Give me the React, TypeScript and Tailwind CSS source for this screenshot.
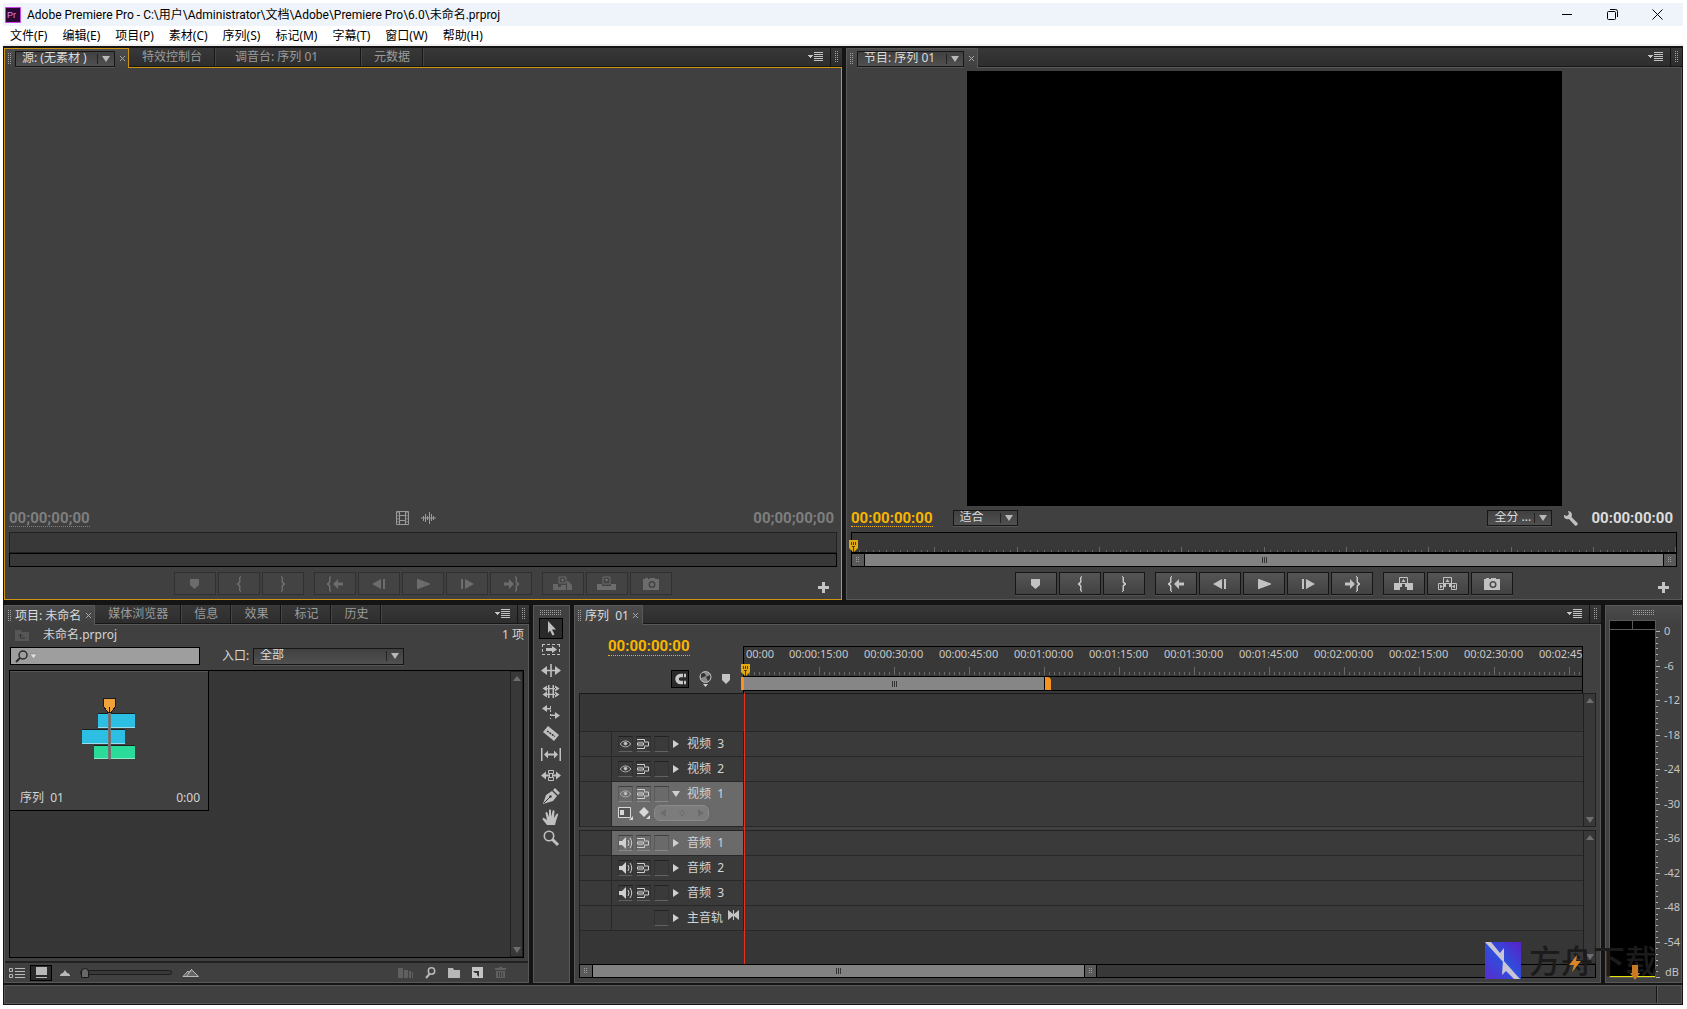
import type { ReactNode } from "react";
import { clsx } from "clsx";

const menus = ["文件(F)", "编辑(E)", "项目(P)", "素材(C)", "序列(S)", "标记(M)", "字幕(T)", "窗口(W)", "帮助(H)"];

const rulerLabels = [
  "00:00:15:00",
  "00:00:30:00",
  "00:00:45:00",
  "00:01:00:00",
  "00:01:15:00",
  "00:01:30:00",
  "00:01:45:00",
  "00:02:00:00",
  "00:02:15:00",
  "00:02:30:00",
  "00:02:45",
];

const dbLabels = ["0", "-6", "-12", "-18", "-24", "-30", "-36", "-42", "-48", "-54"];

function range(n: number) {
  return Array.from({ length: n }, (_, i) => i);
}

/* ---------- small shared pieces ---------- */

function Grip({ cols = 2, rows = 6, className }: { cols?: number; rows?: number; className?: string }) {
  return (
    <svg width={cols * 2} height={rows * 2} className={clsx("shrink-0", className)} shapeRendering="crispEdges">
      {range(cols * rows).map((i) => (
        <rect key={i} x={(i % cols) * 2} y={Math.floor(i / cols) * 2} width="1" height="1" fill="#a0a0a0" />
      ))}
    </svg>
  );
}

function Arrow({ dir = "down", className }: { dir?: "down" | "up" | "right"; className?: string }) {
  const d = { down: "M0 1h8L4 7z", up: "M0 6h8L4 1z", right: "M1 0v8l6-4z" }[dir];
  return (
    <svg width="8" height="8" viewBox="0 0 8 8" className={clsx("shrink-0", className)} fill="currentColor">
      <path d={d} />
    </svg>
  );
}

interface PickerProps {
  label: string;
  value: string;
  className?: string;
}

function Picker({ label, value, className }: PickerProps) {
  return (
    <div
      className={clsx(
        "relative shrink-0 border border-[#161616] bg-linear-to-b from-[#404040] to-[#505050] shadow-[0_1px_0_#555]",
        className,
      )}
    >
      <select
        aria-label={label}
        className="block h-full w-full appearance-none bg-transparent pb-0.5 pl-1.5 text-xs leading-none text-[#dcdcdc] outline-none"
      >
        <option>{value}</option>
      </select>
      <span className="pointer-events-none absolute inset-y-0 right-1 flex items-center gap-1">
        <span className="h-2.5 w-px bg-[#222]" />
        <Arrow className="text-[#b8b8b8]" />
      </span>
    </div>
  );
}

function PanelMenu() {
  return (
    <>
      <button aria-label="面板菜单" className="mr-1.5 flex w-4 items-center">
        <svg width="15" height="10" viewBox="0 0 15 10" shapeRendering="crispEdges" fill="#c4c4c4">
          <path d="M0 3h5v1H4v1H3v1H2V5H1V4H0zM6 0h9v1H6zM6 2h9v1H6zM6 4h9v1H6zM6 6h9v1H6zM6 8h9v1H6z" />
        </svg>
      </button>
      <div className="flex w-3 items-center justify-center border-l border-[#141414]">
        <Grip />
      </div>
    </>
  );
}

interface PanelProps {
  title: ReactNode;
  tabs?: { name: string; wide?: boolean }[];
  focused?: boolean;
  className?: string;
  children: ReactNode;
}

function Panel({ title, tabs = [], focused, className, children }: PanelProps) {
  const edge = focused ? "border-[#cf9512]" : "border-[#585858]";
  return (
    <section className={clsx("flex min-h-0 min-w-0 flex-col bg-[#404040]", className)}>
      <div className="flex h-5 shrink-0 bg-linear-to-b from-[#383838] to-[#2c2c2c] text-xs whitespace-nowrap text-[#9c9c9c]">
        <div
          className={clsx(
            "flex items-center gap-[3px] border-x border-t bg-linear-to-b from-[#4c4c4c] to-[#404040] pr-0.5 pl-[3px] text-[#dcdcdc]",
            edge,
          )}
        >
          <Grip />
          {title}
          <button aria-label="关闭" className="flex h-3 w-2 items-center justify-center">
            <svg width="5" height="5" viewBox="0 0 5 5" stroke="#a8a8a8">
              <path d="M0 0l5 5M5 0L0 5" />
            </svg>
          </button>
        </div>
        <div className={clsx("flex min-w-0 flex-1 border-b", edge)}>
          {tabs.map((tab) => (
            <button
              key={tab.name}
              className={clsx(
                "border-r border-b border-[#161616] pr-3 text-left leading-4 shadow-[1px_0_0_#454545]",
                tab.wide ? "w-[146px] pl-5" : "pl-[13px]",
              )}
            >
              {tab.name}
            </button>
          ))}
          <div className="flex flex-1 justify-end border-b border-[#161616]">
            <PanelMenu />
          </div>
        </div>
      </div>
      <div className={clsx("flex min-h-0 flex-1 flex-col border-x border-b", edge)}>{children}</div>
    </section>
  );
}

/* ---------- transport controls ---------- */

const braceLeft = "M4 0v1H3v5H2v1H1v2h1v1h1v5h1v1h1v-1H4.500V9.500L3 8l1.500-1.500V1H5V0z";

const transportIcons: Record<string, ReactNode> = {
  标记: <path d="M5 3h9v6l-4.500 4L5 9z" />,
  入点: <path transform="translate(7 0)" d={braceLeft} />,
  出点: <path transform="translate(13 0) scale(-1 1)" d={braceLeft} />,
  转到入点: (
    <>
      <path transform="translate(1 0)" d={braceLeft} />
      <path d="M8 8l5-5v3.500h5v3h-5V13z" />
    </>
  ),
  后退: <path d="M12 3v10L3 8zM14 3h2v10h-2z" />,
  播放: <path d="M4 3h1l12 4.500v1L5 13H4z" />,
  前进: <path d="M8 3v10l9-5zM4 3h2v10H4z" />,
  转到出点: (
    <>
      <path transform="translate(19 0) scale(-1 1)" d={braceLeft} />
      <path d="M13 8L8 3v3.500H3v3h5V13z" />
    </>
  ),
  插入: (
    <>
      <path d="M0 8h5v3h3V9h5v5H0zM14 5h1l4 4v5h-5z" opacity=".85" />
      <path d="M6 1h7v6H6z" fill="none" stroke="currentColor" />
      <path d="M7.500 3h4l-2 3z" />
    </>
  ),
  覆盖: (
    <>
      <path d="M0 8h5v2h9V8h5v6H0z" />
      <path d="M6 1h7v7H6z" fill="none" stroke="currentColor" />
      <path d="M7.500 3h4l-2 3z" />
    </>
  ),
  提升: (
    <>
      <path d="M0 7h6v7H0zM13 7h6v7h-6z" />
      <path d="M5.500 1.500h8v6h-8z" fill="none" stroke="currentColor" />
      <path d="M7.500 6h4l-2-3zM6 8h2v3H6zM11 8h2v3h-2z" />
    </>
  ),
  提取: (
    <>
      <path d="M.5 7.500h5v6h-5zM13.500 7.500h5v6h-5zM5.500 1.500h8v6h-8z" fill="none" stroke="currentColor" />
      <path d="M7.500 6h4l-2-3zM2 8.500v4l3-2zM17 8.500v4l-3-2zM6 8h2v3H6zM11 8h2v3h-2z" />
    </>
  ),
  导出帧: (
    <path
      fillRule="evenodd"
      d="M2 3h2V2h3v1h2V2h5v1h4v11H2zM11 5a3.500 3.500 0 1 0 0 7 3.500 3.500 0 1 0 0-7zm0 1.500a2 2 0 1 1 0 4 2 2 0 1 1 0-4z"
    />
  ),
};

function Transport({ edits, disabled }: { edits: string[]; disabled?: boolean }) {
  const groups = [["标记", "入点", "出点"], ["转到入点", "后退", "播放", "前进", "转到出点"], edits];
  return (
    <div className="relative mt-[5px] mb-1 flex justify-center gap-2.5">
      {groups.map((group) => (
        <div key={group[0]} className="flex gap-0.5">
          {group.map((name) => (
            <button
              key={name}
              aria-label={name}
              disabled={disabled}
              className={clsx(
                "flex h-[23px] w-[42px] items-center justify-center border",
                disabled
                  ? "border-[#303030] bg-[#434343] text-[#6c6c6c]"
                  : "border-[#161616] bg-linear-to-b from-[#555] to-[#424242] text-[#c2c2c2] shadow-[0_1px_0_#525252]",
              )}
            >
              <svg width="20" height="16" viewBox="0 0 20 16" fill="currentColor">
                {transportIcons[name]}
              </svg>
            </button>
          ))}
        </div>
      ))}
      <button aria-label="按钮编辑器" className="absolute right-3 bottom-0.5">
        <svg width="11" height="11" viewBox="0 0 11 11" fill="#c4c4c4">
          <path d="M4 0h3v4h4v3H7v4H4V7H0V4h4z" />
        </svg>
      </button>
    </div>
  );
}

function Timecode({ value, className }: { value: string; className?: string }) {
  return <span className={clsx("font-[Roboto] text-[15px] leading-4 font-bold", className)}>{value}</span>;
}

function Playhead({ className }: { className?: string }) {
  return (
    <svg width="9" height="12" viewBox="0 0 9 12" className={className}>
      <path d="M0 0h9v8l-4 4H4L0 8z" fill="#e0ab10" />
      <path d="M2.500 2v3M4.500 2v3M6.500 2v3M4.500 6v6M3 6.500h3" stroke="#4a3a08" />
    </svg>
  );
}

/* ---------- panels ---------- */

function SourcePanel() {
  return (
    <Panel
      focused
      title={<Picker label="源" value="源: (无素材 )" className="h-4 w-[100px]" />}
      tabs={[{ name: "特效控制台" }, { name: "调音台: 序列 01", wide: true }, { name: "元数据" }]}
    >
      <div className="flex-1" />
      <div className="flex h-[26px] items-center justify-between px-1 pb-0.5 text-[#7e7e7e]">
        <Timecode value="00;00;00;00" className="border-b border-dotted border-[#7e7e7e]" />
        <div className="flex items-center gap-3 pr-3 text-[#9a9a9a]">
          <svg width="13" height="14" viewBox="0 0 13 14" fill="none" stroke="currentColor">
            <path d="M.5.500h12v13H.5zM3.500 1v12M9.500 1v12M4 4.500h5M4 9.500h5" />
            <path d="M2 1v12M11 1v12" strokeDasharray="1.500 1.500" />
          </svg>
          <svg width="15" height="12" viewBox="0 0 15 12" stroke="currentColor">
            <path d="M0 6h15M2.500 4v5M4.500 2v8M6.500 4v4M8.500 0v12M10.500 2v7M12.500 4v4" />
          </svg>
        </div>
        <Timecode value="00;00;00;00" className="pr-[3px]" />
      </div>
      <div className="mr-1 ml-1 h-[21px] border border-[#202020] bg-[#383838]" />
      <div className="mr-1 ml-1 h-3.5 border border-black bg-[#383838]" />
      <Transport disabled edits={["插入", "覆盖", "导出帧"]} />
    </Panel>
  );
}

function ProgramPanel() {
  return (
    <Panel title={<Picker label="节目" value="节目: 序列 01" className="h-4 w-[107px]" />}>
      <div className="flex min-h-0 flex-1 justify-center pt-[3px]">
        <div className="aspect-[595/435] h-full bg-black" />
      </div>
      <div className="flex h-[26px] items-center pr-2 pb-0.5 pl-1">
        <Timecode value="00:00:00:00" className="border-b border-dotted border-[#f0b400] text-[#f7b500]" />
        <Picker label="缩放" value="适合" className="ml-5 h-4 w-[65px]" />
        <Picker label="分辨率" value="全分 ..." className="ml-auto h-4 w-[65px]" />
        <button aria-label="设置" className="mx-3">
          <svg width="15" height="15" viewBox="0 0 15 15" fill="#c0c0c0">
            <path d="M4 0l1 3-2 2-3-1c-.5 3 2 5 5 4l6 6.500c1.500 1 3.500-1 2.500-2.500L7.500 6C9 3 7 0 4 0z" />
          </svg>
        </button>
        <Timecode value="00:00:00:00" className="text-[#dcdcdc]" />
      </div>
      <div className="relative mx-1 h-[21px] border border-black bg-[#383838]">
        <svg width="100%" height="19" className="block" fill="#666">
          {range(240).map((i) => (
            <rect key={i} x={Math.round(i * 6.86)} y={i % 12 ? 17 : 14} width="1" height={i % 12 ? 2 : 5} />
          ))}
        </svg>
        <Playhead className="absolute top-[7px] -left-[3px]" />
      </div>
      <div className="mx-1 flex h-3.5 border border-black bg-[#828282]">
        <span className="flex w-[13px] items-center justify-center border-r border-black bg-[#595959]">
          <Grip rows={3} />
        </span>
        <span className="flex flex-1 items-center justify-center">
          <ThumbMarks />
        </span>
        <span className="flex w-[13px] items-center justify-center border-l border-black bg-[#595959]">
          <Grip rows={3} />
        </span>
      </div>
      <Transport edits={["提升", "提取", "导出帧"]} />
    </Panel>
  );
}

function ThumbMarks() {
  return (
    <svg width="5" height="6" viewBox="0 0 5 6" stroke="#333" shapeRendering="crispEdges">
      <path d="M.5 0v6M2.500 0v6M4.500 0v6" />
    </svg>
  );
}

function ScrollColumn({ className }: { className?: string }) {
  return (
    <div
      className={clsx(
        "flex w-[13px] shrink-0 flex-col items-center justify-between border border-[#202020] bg-[#383838] pt-[3px] pb-0.5 text-[#6e6e6e]",
        className,
      )}
    >
      <Arrow dir="up" />
      <Arrow />
    </div>
  );
}

function ProjectPanel() {
  return (
    <Panel
      title="项目: 未命名"
      tabs={[{ name: "媒体浏览器" }, { name: "信息" }, { name: "效果" }, { name: "标记" }, { name: "历史" }]}
    >
      <div className="flex h-[22px] shrink-0 items-center pr-1 pb-0.5 pl-2.5 text-xs text-[#d4d4d4]">
        <svg width="14" height="11" viewBox="0 0 14 11">
          <path d="M0 0h6l1 2h7v9H0z" fill="#565656" />
          <path d="M5.500 8V4.500M3.500 6l2-2 2 2M5.500 8H10" stroke="#333" fill="none" />
        </svg>
        <span className="ml-3.5">未命名.prproj</span>
        <span className="ml-auto">1 项</span>
      </div>
      <div className="flex shrink-0 items-center pl-[5px] text-xs text-[#d4d4d4]">
        <div className="flex h-[18px] w-[190px] items-center border border-black bg-[#9e9e9e] pl-1">
          <svg width="22" height="13" viewBox="0 0 22 13" fill="none" className="shrink-0">
            <circle cx="8" cy="5" r="4" stroke="#2a2a2a" strokeWidth="1.500" />
            <path d="M5 8l-4 4" stroke="#2a2a2a" strokeWidth="2" />
            <path d="M15 4h7l-3.500 5z" fill="#ddd" stroke="#777" strokeWidth=".5" />
          </svg>
          <input aria-label="搜索" className="h-full min-w-0 flex-1 bg-transparent text-[#222] outline-none" />
        </div>
        <span className="ml-[22px] w-[31px]">入口:</span>
        <Picker label="入口" value="全部" className="h-[17px] w-[151px]" />
      </div>
      <div className="mx-1 mt-[5px] flex min-h-0 flex-1 border border-black bg-[#363636]">
        <div className="flex-1">
          <div className="flex h-[140px] w-[199px] flex-col border-r border-b border-black bg-[#404040] shadow-[inset_0_1px_0_#555]">
            <div className="flex flex-1 items-center justify-center pr-0.5">
              <svg width="54" height="62" viewBox="0 0 54 62" shapeRendering="crispEdges">
                <path d="M17 15h37v14H17zM1 31h43v14H1zM13 47h41v14H13z" fill="#1e1e1e" />
                <path d="M17 16h37v13H17zM1 32h43v13H1z" fill="#2dbfe3" />
                <path d="M17 29h37v1H17zM1 45h43v1H1z" fill="#9adcec" />
                <path d="M13 48h41v13H13z" fill="#2bdb9a" />
                <path d="M13 60h41v1H13z" fill="#8ee8c6" />
                <path d="M27 15h3v46h-3z" fill="#777" />
                <path d="M28 8h1v54h-1z" fill="#e03a2c" />
                <path d="M22.500 1.500q0-1 1-1h10q1 0 1 1v7l-4.500 6h-3l-4.500-6z" fill="#f0a23a" stroke="#1c1c1c" />
                <path d="M28 9h1v6h-1z" fill="#1c1c1c" />
              </svg>
            </div>
            <div className="flex h-6 items-center justify-between pr-2 pl-2.5 text-xs text-[#d4d4d4]">
              <span className="whitespace-pre">序列  01</span>
              <span>0:00</span>
            </div>
          </div>
        </div>
        <ScrollColumn />
      </div>
      <div className="mt-[3px] flex h-[21px] shrink-0 items-center border-t-2 border-[#222] pl-1 text-[#b8b8b8]">
        <button aria-label="列表视图" className="shrink-0">
          <svg width="16" height="12" viewBox="0 0 16 12" fill="none" stroke="currentColor">
            <path d="M.5 1.500h3v3h-3zM.5 7.500h3v3h-3zM6 1.500h10M6 4.500h10M6 7.500h10M6 10.500h10" />
          </svg>
        </button>
        <button
          aria-label="图标视图"
          className="ml-[5px] flex h-4 w-[22px] shrink-0 items-center justify-center border border-black bg-[#2a2a2a]"
        >
          <svg width="11" height="11" viewBox="0 0 11 11" fill="currentColor">
            <path d="M0 0h11v8H0zM0 10h11v1H0z" />
          </svg>
        </button>
        <svg width="10" height="6" viewBox="0 0 10 6" fill="currentColor" className="ml-2 shrink-0">
          <path d="M0 6V5l2-2h1l2-3 2 3h1l2 2v1z" />
        </svg>
        <input
          type="range"
          aria-label="缩放"
          defaultValue={0}
          className="mx-2.5 h-[5px] w-[92px] appearance-none rounded-full border border-[#1c1c1c] bg-[#383838] [&::-webkit-slider-thumb]:h-2.5 [&::-webkit-slider-thumb]:w-2 [&::-webkit-slider-thumb]:appearance-none [&::-webkit-slider-thumb]:rounded-t-full [&::-webkit-slider-thumb]:border [&::-webkit-slider-thumb]:border-[#181818] [&::-webkit-slider-thumb]:bg-[#686868]"
        />
        <svg width="17" height="8" viewBox="0 0 17 8" fill="#666" stroke="currentColor" className="shrink-0">
          <path d="M1 7.500L6 2l1 1.500L9.500.500l7 7zM4.500 7.500l5-7" />
        </svg>
        <div className="ml-auto flex items-center gap-3 pr-[22px]">
          <svg width="15" height="10" viewBox="0 0 15 10" fill="#606060">
            <path d="M0 0h5v10H0zM6 2h4v8H6zM11 3h2v7h-2zM14 4h1v6h-1z" />
          </svg>
          <button aria-label="查找">
            <svg width="11" height="12" viewBox="0 0 11 12" fill="none" stroke="currentColor" strokeWidth="1.500">
              <circle cx="6.500" cy="4" r="3.200" />
              <path d="M4.500 7L1 11" strokeWidth="2" />
            </svg>
          </button>
          <button aria-label="新建文件夹">
            <svg width="12" height="10" viewBox="0 0 12 10" fill="currentColor">
              <path d="M0 0h5l1 2h6v8H0z" />
            </svg>
          </button>
          <button aria-label="新建分项">
            <svg width="11" height="11" viewBox="0 0 11 11">
              <path d="M0 0h11v11H0z" fill="#c4c4c4" />
              <path d="M1 4h6v6L5 8V6H3z" fill="#333" />
            </svg>
          </button>
          <svg width="11" height="11" viewBox="0 0 11 11" fill="#606060">
            <path d="M4 0h3v1h4v2H0V1h4zM1 4h9v7H1z" />
            <path d="M3.500 5v5M5.500 5v5M7.500 5v5" stroke="#404040" />
          </svg>
        </div>
      </div>
    </Panel>
  );
}

const tools: { name: string; icon: ReactNode }[] = [
  { name: "选择工具", icon: <path d="M7 1l8 8.500h-4l2.500 5-2 1L9 10.500 7 13z" /> },
  {
    name: "轨道选择工具",
    icon: (
      <>
        <path d="M1 3.500h18M1 13.500h18M1.500 3v11M18.500 3v11" stroke="currentColor" strokeDasharray="3 2" />
        <path d="M5 7h6V5l5 3.500-5 3.500v-2H5z" />
      </>
    ),
  },
  { name: "波纹编辑工具", icon: <path d="M9.200 2h1.600v13H9.200zM6 4v3.700h8V4l6 4.500-6 4.500V9.300H6V13L0 8.500z" /> },
  {
    name: "滚动编辑工具",
    icon: (
      <path d="M7 2h1.500v13H7zM11.500 2H13v13h-1.500zM5 5h10v1.200H5zM5 10.800h10V12H5zM6 2.600v6L1.500 5.600zM14 2.600v6l4.500-3zM6 8.400v6l-4.500-3zM14 8.400v6l4.500-3z" />
    ),
  },
  {
    name: "速率伸缩工具",
    icon: (
      <>
        <path d="M6 1v7L1 4.500zM6 4h4v1.500H6zM14 8v7l5-3.500zM10 10.500h4V12h-4z" />
        <path d="M9.500 2v13" stroke="currentColor" strokeDasharray="2 2" />
      </>
    ),
  },
  {
    name: "剃刀工具",
    icon: (
      <>
        <path d="M2 7l5-6 11 9-5 6z" />
        <path d="M6 6l8 5.500" stroke="#333" strokeDasharray="2 1" strokeWidth="1.500" />
      </>
    ),
  },
  { name: "错落工具", icon: <path d="M0 2h1.500v13H0zM18.500 2H20v13h-1.500zM3 8.500l4-4v3h6v-3l4 4-4 4v-3H7v3z" /> },
  {
    name: "滑动工具",
    icon: (
      <>
        <path d="M0 8.500l5-4v3h3v2H5v3zM20 8.500l-5-4v3h-3v2h3v3z" />
        <path d="M7.500 3.500h5v3h-5zM7.500 10.500h5v3h-5zM8.500 6v5M11.500 6v5" fill="none" stroke="currentColor" />
      </>
    ),
  },
  {
    name: "钢笔工具",
    icon: (
      <>
        <path d="M2 16l3-9 6-4 5 5-4 5zM12 2l2-2 5 5-2 2z" />
        <path d="M3 15l6-6" stroke="#333" />
        <circle cx="9.500" cy="8.500" r="1.200" fill="#333" />
      </>
    ),
  },
  {
    name: "手形工具",
    icon: (
      <path d="M6 16l-4-5c-1-1.500 0-2.500 1-2l3 2-1.500-7c0-1.500 1.500-1.500 2 0L8 8V1.500c0-1.300 2-1.300 2 0V8l1.500-6c.3-1.300 2-1 2 0L13 9l2.500-4c.5-1 2-.5 1.500 1l-2 6-1 4z" />
    ),
  },
  {
    name: "缩放工具",
    icon: (
      <>
        <circle cx="8" cy="6" r="4.700" fill="none" stroke="currentColor" strokeWidth="1.600" />
        <path d="M11 9l6 6" stroke="currentColor" strokeWidth="3" />
      </>
    ),
  },
];

function ToolsPanel() {
  return (
    <section className="flex flex-col items-center border border-[#585858] bg-[#404040] pt-1 pr-0.5">
      <Grip cols={11} rows={3} />
      <div className="mt-0.5 flex flex-col">
        {tools.map((tool, i) => (
          <button
            key={tool.name}
            aria-label={tool.name}
            className={clsx(
              "flex h-[21px] w-6 items-center justify-center text-[#c0c0c0]",
              i === 0 && "border border-black bg-[#2a2a2a]",
            )}
          >
            <svg width="20" height="17" viewBox="0 0 20 17" fill="currentColor" className="shrink-0">
              {tool.icon}
            </svg>
          </button>
        ))}
      </div>
    </section>
  );
}

/* ---------- timeline ---------- */

interface Track {
  name: string;
  kind: "video" | "audio" | "master";
  active?: boolean;
  open?: boolean;
}

const videoTracks: Track[] = [
  { name: "视频  3", kind: "video" },
  { name: "视频  2", kind: "video" },
  { name: "视频  1", kind: "video", active: true, open: true },
];

const audioTracks: Track[] = [
  { name: "音频  1", kind: "audio", active: true },
  { name: "音频  2", kind: "audio" },
  { name: "音频  3", kind: "audio" },
  { name: "主音轨", kind: "master" },
];

function Toggle({ label, children }: { label: string; children?: ReactNode }) {
  return (
    <button
      aria-label={label}
      className="flex h-4 w-[15px] shrink-0 items-center justify-center border border-x-black/15 border-t-black/40 border-b-white/20 text-[#d0d0d0]"
    >
      {children}
    </button>
  );
}

function TrackRow({ track }: { track: Track }) {
  return (
    <div className={clsx("flex border-b border-[#282828] bg-[#3a3a3a]", track.open ? "h-[45px]" : "h-[25px]")}>
      <div className="w-8 border-r border-[#282828]" />
      <div className={clsx("w-[132px] border-r border-[#222] pt-1 pl-1.5", track.active && "bg-[#6a6a6a]")}>
        <div className="flex items-center gap-[3px]">
          {track.kind === "master" ? (
            <span className="w-[33px] shrink-0" />
          ) : (
            <>
              <Toggle label="切换轨道输出">
                {track.kind === "video" ? (
                  <svg width="13" height="10" viewBox="0 0 13 10" fill="none" stroke="#a8a8a8" className="shrink-0">
                    <path d="M1 5q5.500-6.500 11 0-5.500 6-11 0z" />
                    <circle cx="6.500" cy="4.500" r="1.500" fill="currentColor" />
                  </svg>
                ) : (
                  <svg width="14" height="12" viewBox="0 0 14 12" fill="currentColor" className="shrink-0">
                    <path d="M0 4h3l4-4v12L3 8H0z" />
                    <path d="M9 3q2 3 0 6M11 1q3.500 5 0 10" fill="none" stroke="currentColor" />
                  </svg>
                )}
              </Toggle>
              <Toggle label="同步锁定">
                <svg width="13" height="10" viewBox="0 0 13 10" fill="none" stroke="currentColor" className="shrink-0">
                  <path d="M0 .5h7.500v2M0 9.500h7.500v-2M.5 4h6v2h-6zM7 3h4.500v4H7" />
                  <path d="M0 3h6M0 7h6" opacity=".4" />
                </svg>
              </Toggle>
            </>
          )}
          <Toggle label="锁定轨道" />
          <Arrow dir={track.open ? "down" : "right"} className="text-[#d0d0d0]" />
          <span className="ml-1 text-xs leading-4 whitespace-pre text-[#d4d4d4]">{track.name}</span>
          {track.kind === "master" && (
            <svg width="11" height="10" viewBox="0 0 11 10" fill="#c4c4c4" className="mb-1.5 ml-0.5 shrink-0">
              <path d="M0 0l5 4V0h1v4l5-4v10L6 6v4H5V6l-5 4z" />
            </svg>
          )}
        </div>
        {track.open && (
          <div className="mt-[3px] flex items-center gap-1.5 text-[#d8d8d8]">
            <svg width="15" height="13" viewBox="0 0 15 13">
              <path d="M.5.500h12v10H.5z" fill="#555" stroke="currentColor" />
              <path d="M2 3h4v5H2zM15 9v4h-4z" fill="currentColor" />
            </svg>
            <svg width="11" height="12" viewBox="0 0 11 12" fill="currentColor">
              <path d="M5 0l5 5-5 5-5-5zM11 8v4H7z" />
            </svg>
            <div className="-ml-0.5 flex h-4 w-[55px] items-center justify-center gap-3 rounded-md border border-[#8a8a8a] bg-[#7c7c7c] text-[#6c6c6c]">
              <Arrow dir="right" className="rotate-180" />
              <svg width="6" height="8" viewBox="0 0 6 8" fill="none" stroke="currentColor">
                <path d="M3 1l2.500 3L3 7 .5 4z" />
              </svg>
              <Arrow dir="right" />
            </div>
          </div>
        )}
      </div>
    </div>
  );
}

function TimelinePanel() {
  return (
    <Panel title={<span className="whitespace-pre">序列  01</span>}>
      <div className="flex h-[68px] shrink-0 pr-[17px]">
        <div className="flex w-[168px] shrink-0 flex-col">
          <div className="pt-2 pl-[33px]">
            <Timecode value="00:00:00:00" className="border-b border-dotted border-[#f0b400] text-[#f7b500]" />
          </div>
          <div className="mt-auto flex items-center justify-end gap-2.5 pr-[13px] pb-[5px]">
            <button aria-label="吸附" className="flex size-[18px] items-center justify-center border border-black bg-[#2a2a2a]">
              <svg width="13" height="12" viewBox="0 0 13 12" fill="none" stroke="#c8c8c8" strokeWidth="3.500">
                <path d="M12 2.500H6.500a3.500 3.500 0 0 0 0 7H12" />
                <path d="M9.500 0v12" stroke="#2a2a2a" strokeWidth="1" />
              </svg>
            </button>
            <svg width="13" height="16" viewBox="0 0 13 16">
              <circle cx="6.500" cy="6" r="5.500" fill="#8c8c8c" stroke="#bbb" />
              <path d="M2 3q4-3 5 2L2 7zM7 6l4-2q1 4-2 6z" fill="#333" />
              <path d="M4 13h5l-2.500 3z" fill="#d0d0d0" />
            </svg>
            <svg width="8" height="10" viewBox="0 0 8 10" fill="#c4c4c4">
              <path d="M0 0h8v6L4 10 0 6z" />
            </svg>
          </div>
        </div>
        <div className="relative mt-[21px] flex min-w-0 flex-1 flex-col border-x border-t border-black bg-[#383838]">
          <div className="flex h-[18px] overflow-hidden font-[Noto_Sans] text-[11px] leading-[14px] text-[#c8c8c8]">
            <span className="w-[38px] shrink-0 pl-0.5">00:00</span>
            {rulerLabels.map((label) => (
              <span key={label} className="w-[75px] shrink-0 pl-[7px]">
                {label}
              </span>
            ))}
          </div>
          <svg width="100%" height="11" className="block shrink-0" fill="#686868">
            {range(320).map((i) => (
              <rect key={i} x={i * 5} y={i % 15 ? 7 : 2} width="1" height={i % 15 ? 3 : 8} />
            ))}
          </svg>
          <div className="flex h-[15px] border-y border-black">
            <span className="w-[301px] border-r border-black bg-[#868686]">
              <span className="flex h-full items-center justify-center">
                <ThumbMarks />
              </span>
            </span>
            <span className="w-1.5 rounded-tr-sm bg-[#f7931e]" />
          </div>
          <Playhead className="absolute top-[17px] -left-[3px]" />
          <span className="absolute bottom-[3px] -left-[3px] h-[13px] w-[3px] bg-[#f7931e]" />
        </div>
      </div>
      <div className="mr-1 ml-1 flex min-h-0 flex-1 flex-col">
        <div className="relative flex min-h-0 flex-1 flex-col">
          <div className="flex shrink-0">
            <div className="flex-1 border-t border-l border-black/60">
              <div className="h-[38px] border-b border-[#282828] bg-[#363636]" />
              {videoTracks.map((track) => (
                <TrackRow key={track.name} track={track} />
              ))}
            </div>
            <ScrollColumn />
          </div>
          <div className="h-[3px] shrink-0" />
          <div className="flex flex-1">
            <div className="flex-1 border-t border-l border-[#222] bg-[#363636]">
              {audioTracks.map((track) => (
                <TrackRow key={track.name} track={track} />
              ))}
            </div>
            <ScrollColumn />
          </div>
          <span className="absolute inset-y-0 left-[165px] w-px bg-[#e8321c]" />
        </div>
        <div className="mb-1 flex h-3.5 shrink-0 border border-black bg-[#383838]">
          <span className="flex w-[13px] items-center justify-center border-r border-black bg-[#595959]">
            <Grip rows={3} />
          </span>
          <span className="flex w-[48.4%] items-center justify-center bg-[#828282]">
            <ThumbMarks />
          </span>
          <span className="flex w-[13px] items-center justify-center border-x border-black bg-[#595959]">
            <Grip rows={3} />
          </span>
        </div>
      </div>
    </Panel>
  );
}

function MeterPanel() {
  return (
    <section className="flex min-h-0 flex-col items-center border border-[#585858] bg-linear-to-b from-[#4a4a4a] to-[#404040] to-5% pt-1">
      <Grip cols={11} rows={3} />
      <div className="mt-1 mb-1 flex min-h-0 w-full flex-1 pl-[3px]">
        <div className="flex w-[47px] flex-col border border-[#585858] bg-black">
          <div className="grid h-[9px] grid-cols-2 border-b border-[#585858]">
            <span className="border-r border-[#585858]" />
          </div>
          <div className="mt-auto h-px bg-[#e8e000]" />
        </div>
        <div className="w-1.5 pt-[11px] pb-px">
          <svg width="5" height="100%" className="block overflow-visible" fill="#b0b0b0" shapeRendering="crispEdges">
            {range(61).map((i) => (
              <rect key={i} y={`${(i * 100) / 60}%`} width={i % 6 ? 2 : 4} height="1" />
            ))}
          </svg>
        </div>
        <div className="flex flex-1 flex-col pt-[5px] font-[Noto_Sans] text-[11px] leading-3 text-[#c4c4c4]">
          {dbLabels.map((label) => (
            <div key={label} className="min-h-0 flex-1 pl-0.5">
              {label}
            </div>
          ))}
          <div className="-mt-1 pl-[3px]">dB</div>
        </div>
      </div>
    </section>
  );
}

function Watermark() {
  return (
    <div className="pointer-events-none absolute right-[26px] bottom-[26px] flex items-center gap-2">
      <svg width="36" height="37" viewBox="0 0 36 37">
        <defs>
          <linearGradient id="logo" x1="0" y1="1" x2="1" y2="0">
            <stop offset="0" stopColor="#5a2ad0" />
            <stop offset=".5" stopColor="#2c50dc" />
            <stop offset="1" stopColor="#5a20c8" />
          </linearGradient>
        </defs>
        <path d="M0 0h36v37H0z" fill="url(#logo)" />
        <path d="M0 0h6l9 11 4-5v15zM35 37h-6l-8-8-4 4 1-15z" fill="#c9c4d6" />
      </svg>
      <div className="relative text-[32px] leading-9 font-medium text-[#1b1b1b]">
        方舟下载
        <svg width="12" height="17" viewBox="0 0 12 17" fill="#d9852a" className="absolute top-3 left-[40px]">
          <path d="M8 0L0 10h5l-2 7 9-11H7z" />
        </svg>
        <svg width="10" height="15" viewBox="0 0 10 15" fill="#c97a24" className="absolute top-[22px] left-[101px]">
          <path d="M2 0h6v8h2l-5 7-5-7h2z" />
        </svg>
      </div>
    </div>
  );
}

function TitleBar() {
  return (
    <header className="bg-white text-xs text-black">
      <div className="flex h-[23px] items-center bg-[#eff3fa] pl-0.5">
        <svg width="16" height="16" viewBox="0 0 16 16">
          <path d="M.5.500h15v15H.5z" fill="#2a0a34" stroke="#c847e6" />
          <text x="2" y="11" fontSize="9" fontFamily="Liberation Sans" fill="#e389ff">
            Pr
          </text>
        </svg>
        <h1 className="ml-1.5 font-['Roboto','Noto_Sans_CJK_SC',sans-serif]">
          Adobe Premiere Pro - C:\用户\Administrator\文档\Adobe\Premiere Pro\6.0\未命名.prproj
        </h1>
        <div className="ml-auto flex items-center gap-[34px] pr-5">
          <button aria-label="最小化">
            <svg width="11" height="11" stroke="#000">
              <path d="M0 5.500h10" />
            </svg>
          </button>
          <button aria-label="还原">
            <svg width="11" height="11" viewBox="0 0 11 11" fill="none" stroke="#000">
              <rect x=".5" y="2.500" width="8" height="8" rx="1" />
              <path d="M3 .5h5.500q2 0 2 2V8" />
            </svg>
          </button>
          <button aria-label="关闭窗口">
            <svg width="11" height="11" viewBox="0 0 11 11" stroke="#000">
              <path d="M.5.500l10 10M10.500.500l-10 10" />
            </svg>
          </button>
        </div>
      </div>
      <nav className="flex h-5 items-center gap-[15px] border-b-2 border-[#f0f0f0] pt-0.5 pl-[7px]">
        {menus.map((menu) => (
          <button key={menu} className="leading-4">
            {menu}
          </button>
        ))}
      </nav>
    </header>
  );
}

export default function App() {
  return (
    <div className="flex h-screen min-h-[700px] flex-col bg-white pt-[3px] pr-1 pb-1 pl-[3px] font-['Noto_Sans','Noto_Sans_CJK_SC',sans-serif]">
      <TitleBar />
      <main className="relative flex min-h-0 flex-1 flex-col bg-[#141414] px-px pt-0.5 pb-px">
        <div className="grid min-h-0 flex-1 grid-cols-[838fr_836fr] gap-1">
          <SourcePanel />
          <ProgramPanel />
        </div>
        <div className="mt-[5px] grid h-[378px] grid-cols-[525fr_37px_1027fr_77px] grid-rows-[minmax(0,1fr)] gap-1">
          <ProjectPanel />
          <ToolsPanel />
          <TimelinePanel />
          <MeterPanel />
        </div>
        <footer className="mt-0.5 flex h-[19px] border border-[#585858] bg-[#404040]">
          <div className="flex-1 border-r border-[#141414]" />
          <div className="w-6 border-l border-[#585858]" />
        </footer>
        <Watermark />
      </main>
    </div>
  );
}
